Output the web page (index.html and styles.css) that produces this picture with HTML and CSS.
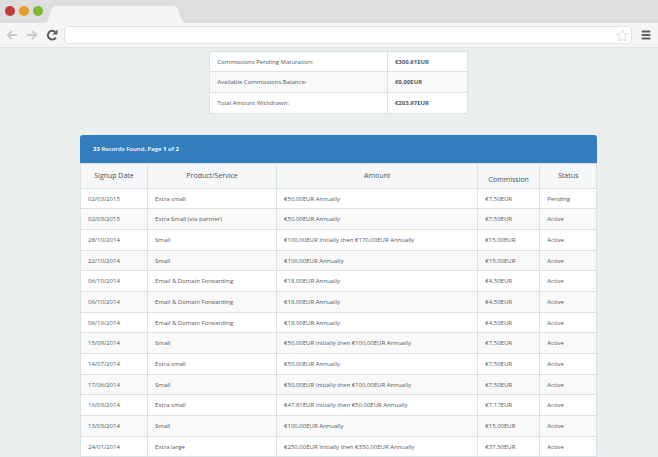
FILE: index.html
```
<!DOCTYPE html>
<html lang="en">

<head>
    <meta charset="UTF-8">
    <meta name="viewport" content="width=device-width, initial-scale=1.0">
    <title>Affiliate Commissions</title>
    <link rel="stylesheet" href="styles.css">
</head>

<body>
    <header class="browser">
        <div class="tab-bar">
            <div class="dots">
                <span class="dot red"></span>
                <span class="dot orange"></span>
                <span class="dot green"></span>
            </div>
            <svg class="tab" viewBox="0 0 139 17" preserveAspectRatio="none" aria-hidden="true">
                <path d="M0 17 C2 17 2.500 15.500 3 14 L7 3 C8 .8 8.500 0 10.500 0 H129 C131 0 132 1 133 3 L137 14 C137.500 15.500 138 17 139 17 Z" fill="#f4f6f5"/>
            </svg>
        </div>
        <div class="toolbar">
            <button class="tool" type="button" aria-label="Back">
                <svg width="12" height="12" viewBox="0 0 12 12" fill="none" stroke="#c9c9c9" stroke-width="1.900">
                    <path d="M11 6 H2 M6 1.800 L1.800 6 L6 10.200"/>
                </svg>
            </button>
            <button class="tool" type="button" aria-label="Forward">
                <svg width="12" height="12" viewBox="0 0 12 12" fill="none" stroke="#c9c9c9" stroke-width="1.900">
                    <path d="M1 6 H10 M6 1.800 L10.200 6 L6 10.200"/>
                </svg>
            </button>
            <button class="tool" type="button" aria-label="Reload">
                <svg width="12" height="12" viewBox="0 0 12 12">
                    <path d="M9.900 8.600 A4.400 4.400 0 1 1 9.300 3" fill="none" stroke="#5c5c5c" stroke-width="2"/>
                    <path d="M11.500 .4 V5.600 H6.300 Z" fill="#5c5c5c"/>
                </svg>
            </button>
            <div class="address">
                <input class="address-input" type="text" aria-label="Address">
                <button class="star" type="button" aria-label="Bookmark">
                    <svg width="13" height="13" viewBox="0 0 13 13" fill="#fff" stroke="#dcdcdc">
                        <path d="M6.500 .9 L8.100 4.700 L12.200 5 L9.100 7.700 L10.100 11.800 L6.500 9.600 L2.900 11.800 L3.900 7.700 L.8 5 L4.900 4.700 Z"/>
                    </svg>
                </button>
            </div>
            <button class="menu" type="button" aria-label="Menu">
                <svg width="10" height="10" viewBox="0 0 10 10" fill="none" stroke="#606060" stroke-width="2" stroke-linecap="round">
                    <path d="M1.500 1.500 H8.500 M1.500 5 H8.500 M1.500 8.500 H8.500"/>
                </svg>
            </button>
        </div>
    </header>

    <main class="content">
        <table class="summary">
            <tr>
                <th scope="row">Commissions Pending Maturation:</th>
                <td>€300,61EUR</td>
            </tr>
            <tr>
                <th scope="row">Available Commissions Balance:</th>
                <td>€0,00EUR</td>
            </tr>
            <tr>
                <th scope="row">Total Amount Withdrawn:</th>
                <td>€203,97EUR</td>
            </tr>
        </table>

        <section class="records">
            <h2 class="records-title"><b>33</b> Records Found, Page <b>1</b> of <b>2</b></h2>
            <table class="records-table">
                <colgroup>
                    <col class="col-date">
                    <col class="col-product">
                    <col class="col-amount">
                    <col class="col-commission">
                    <col class="col-status">
                </colgroup>
                <thead>
                    <tr>
                        <th>Signup Date</th>
                        <th>Product/Service</th>
                        <th>Amount</th>
                        <th class="low">Commission</th>
                        <th>Status</th>
                    </tr>
                </thead>
                <tbody>
                    <tr><td>02/03/2015</td><td>Extra small</td><td>€50,00EUR Annually</td><td>€7,50EUR</td><td>Pending</td></tr>
                    <tr><td>02/03/2015</td><td>Extra Small (via partner)</td><td>€50,00EUR Annually</td><td>€7,50EUR</td><td>Active</td></tr>
                    <tr><td>28/10/2014</td><td>Small</td><td>€100,00EUR Initially then €170,00EUR Annually</td><td>€15,00EUR</td><td>Active</td></tr>
                    <tr><td>22/10/2014</td><td>Small</td><td>€100,00EUR Annually</td><td>€15,00EUR</td><td>Active</td></tr>
                    <tr><td>06/10/2014</td><td>Email &amp; Domain Forwarding</td><td>€18,00EUR Annually</td><td>€4,50EUR</td><td>Active</td></tr>
                    <tr><td>06/10/2014</td><td>Email &amp; Domain Forwarding</td><td>€18,00EUR Annually</td><td>€4,50EUR</td><td>Active</td></tr>
                    <tr><td>06/10/2014</td><td>Email &amp; Domain Forwarding</td><td>€18,00EUR Annually</td><td>€4,50EUR</td><td>Active</td></tr>
                    <tr><td>15/09/2014</td><td>Small</td><td>€50,00EUR Initially then €100,00EUR Annually</td><td>€7,50EUR</td><td>Active</td></tr>
                    <tr><td>14/07/2014</td><td>Extra small</td><td>€50,00EUR Annually</td><td>€7,50EUR</td><td>Active</td></tr>
                    <tr><td>17/06/2014</td><td>Small</td><td>€50,00EUR Initially then €100,00EUR Annually</td><td>€7,50EUR</td><td>Active</td></tr>
                    <tr><td>16/03/2014</td><td>Extra small</td><td>€47,81EUR Initially then €50,00EUR Annually</td><td>€7,17EUR</td><td>Active</td></tr>
                    <tr><td>13/03/2014</td><td>Small</td><td>€100,00EUR Annually</td><td>€15,00EUR</td><td>Active</td></tr>
                    <tr><td>24/01/2014</td><td>Extra large</td><td>€250,00EUR Initially then €350,00EUR Annually</td><td>€37,50EUR</td><td>Active</td></tr>
                </tbody>
            </table>
        </section>
    </main>
</body>

</html>
```
FILE: styles.css
```
/* General styles */
* {
    box-sizing: border-box;
}

body {
    margin: 0;
    background-color: #ebeff0;
    color: #505960;
    font-family: 'Open Sans', 'Noto Sans', sans-serif;
    font-size: 6px;
    line-height: 8px;
}

button {
    display: flex;
    padding: 0;
    border: none;
    background: none;
    cursor: pointer;
}

/* Browser frame */
.tab-bar {
    display: flex;
    align-items: flex-end;
    gap: 2px;
    height: 23px;
    padding-left: 5px;
    background-color: #dedede;
}

.dots {
    display: flex;
    gap: 4px;
    padding-bottom: 7px;
}

.dot {
    width: 10px;
    height: 10px;
    border-radius: 50%;
}

.red {
    background-color: #c23a33;
}

.orange {
    background-color: #e99d25;
}

.green {
    background-color: #7ab82f;
}

.tab {
    width: 139px;
    height: 17px;
}

.toolbar {
    display: flex;
    align-items: center;
    gap: 8px;
    height: 25px;
    padding: 0 7px 0 6px;
    background-color: #f4f6f5;
    border-bottom: 1px solid #e0e3e3;
}

.address {
    display: flex;
    flex: 1;
    align-items: center;
    height: 18px;
    margin: 0 1px 0 -2px;
    padding-right: 2px;
    background-color: #fff;
    border: 1px solid #e2e4e4;
    border-radius: 4px;
}

.address-input {
    flex: 1;
    min-width: 0;
    padding: 0 5px;
    border: none;
    outline: none;
    background: none;
    font-size: 10px;
}

/* Page content */
.content {
    padding: 3px 61px 0 80px;
}

table {
    width: 100%;
    border-collapse: collapse;
    background-color: #fff;
}

th,
td {
    padding: 6px 7px;
    border: 1px solid #dbe2e4;
    text-align: left;
    font-weight: normal;
}

.summary {
    width: 50%;
    margin: 0 auto 21px;
}

.summary th {
    width: 69%;
}

.summary td {
    font-weight: bold;
}

.summary tr:nth-child(even),
.records-table tbody tr:nth-child(even) {
    background-color: #f9f9f9;
}

.records-title {
    margin: 0;
    padding: 10px 13px;
    background-color: #337fbe;
    border-radius: 3px 3px 0 0;
    color: #fff;
    font-size: 6px;
    font-weight: 600;
    line-height: 8px;
}

.records-title b {
    font-weight: 700;
}

.records-table {
    table-layout: fixed;
}

.col-date {
    width: 13%;
}

.col-product {
    width: 25%;
}

.col-amount {
    width: 39%;
}

.col-commission {
    width: 12%;
}

.col-status {
    width: 11%;
}

.records-table thead {
    background-color: #f5f7f9;
    color: #43515f;
}

.records-table thead th {
    padding: 8px 0;
    font-size: 7px;
    text-align: center;
    vertical-align: top;
}

.records-table thead .low {
    padding: 12px 0 4px;
}

/* every third row is a pixel shorter */
.summary tr:nth-child(3n+1) td,
.summary tr:nth-child(3n+1) th,
.records-table tbody tr:nth-child(3n+1) td {
    padding-bottom: 5px;
}
```
